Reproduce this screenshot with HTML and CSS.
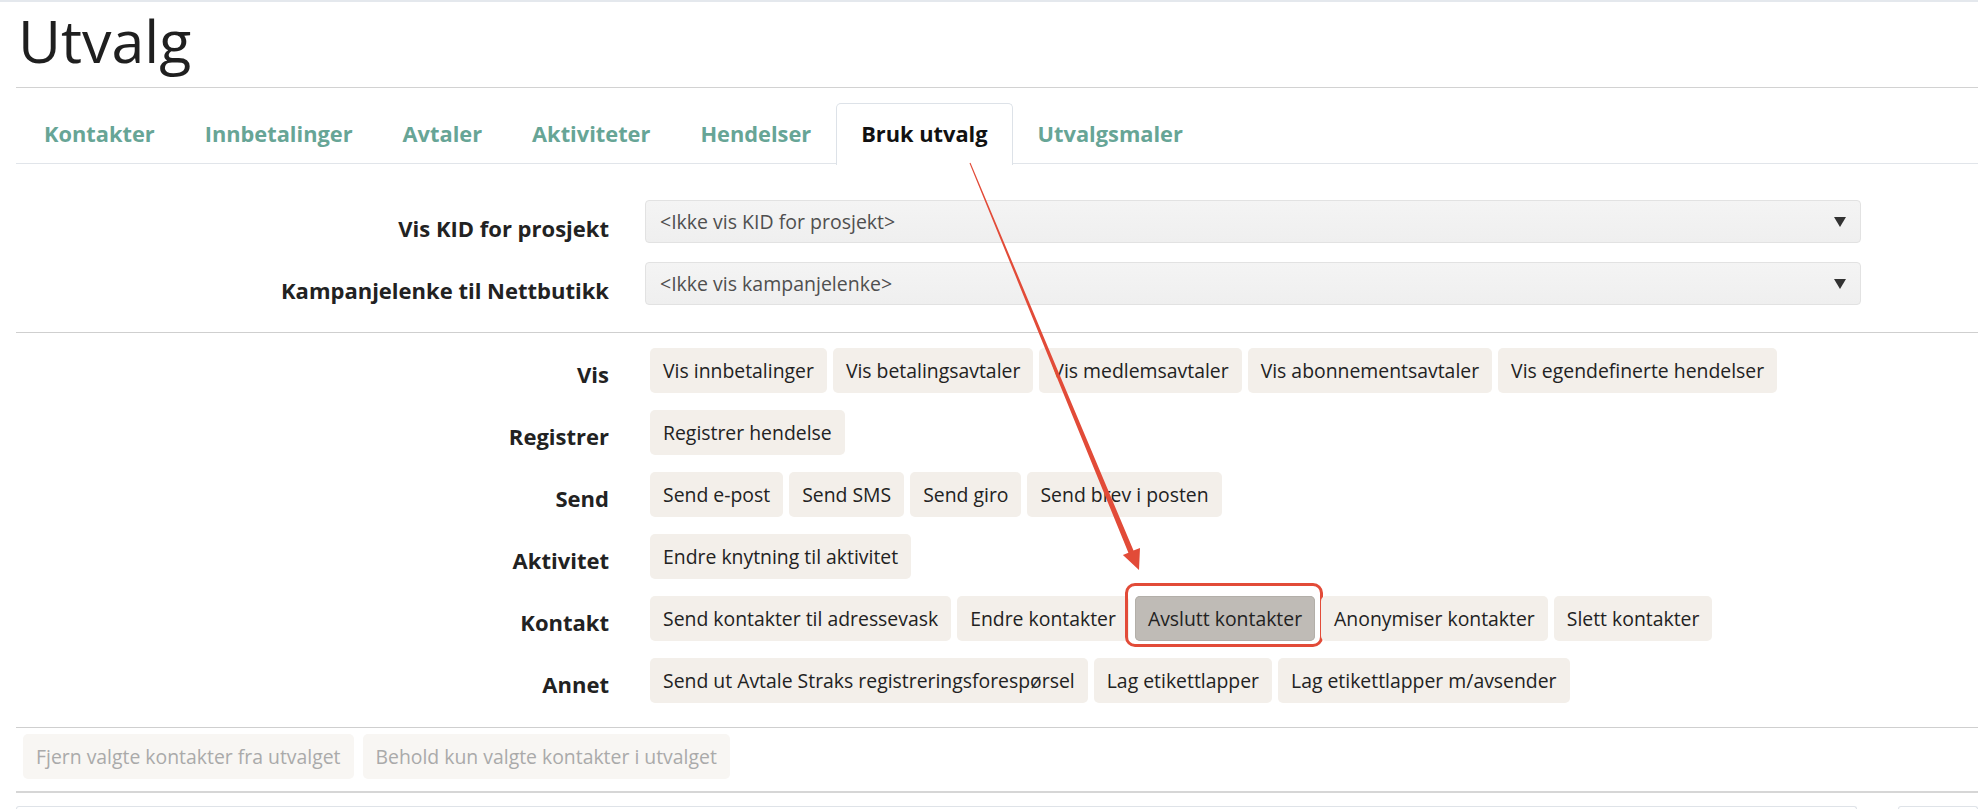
FILE: index.html
```html
<!DOCTYPE html>
<html lang="no">
<head>
    <meta charset="UTF-8">
    <meta name="viewport" content="width=device-width, initial-scale=1.0">
    <title>Utvalg</title>
    <link rel="stylesheet" href="styles.css">
</head>
<body>
    <div class="page">
        <header class="page-header">
            <h1>Utvalg</h1>
        </header>

        <ul class="tabs">
            <li class="tab"><a href="#">Kontakter</a></li>
            <li class="tab"><a href="#">Innbetalinger</a></li>
            <li class="tab"><a href="#">Avtaler</a></li>
            <li class="tab"><a href="#">Aktiviteter</a></li>
            <li class="tab"><a href="#">Hendelser</a></li>
            <li class="tab active"><a href="#">Bruk utvalg</a></li>
            <li class="tab"><a href="#">Utvalgsmaler</a></li>
        </ul>

        <section class="settings">
            <div class="field-row">
                <label class="field-label" for="kid">Vis KID for prosjekt</label>
                <div class="select-wrap">
                    <select id="kid"><option>&lt;Ikke vis KID for prosjekt&gt;</option></select>
                </div>
            </div>
            <div class="field-row">
                <label class="field-label" for="kampanje">Kampanjelenke til Nettbutikk</label>
                <div class="select-wrap">
                    <select id="kampanje"><option>&lt;Ikke vis kampanjelenke&gt;</option></select>
                </div>
            </div>
        </section>

        <section class="actions">
            <div class="action-row">
                <span class="action-label">Vis</span>
                <div class="btn-group">
                    <button class="btn">Vis innbetalinger</button>
                    <button class="btn">Vis betalingsavtaler</button>
                    <button class="btn">Vis medlemsavtaler</button>
                    <button class="btn">Vis abonnementsavtaler</button>
                    <button class="btn">Vis egendefinerte hendelser</button>
                </div>
            </div>
            <div class="action-row">
                <span class="action-label">Registrer</span>
                <div class="btn-group">
                    <button class="btn">Registrer hendelse</button>
                </div>
            </div>
            <div class="action-row">
                <span class="action-label">Send</span>
                <div class="btn-group">
                    <button class="btn">Send e-post</button>
                    <button class="btn">Send SMS</button>
                    <button class="btn">Send giro</button>
                    <button class="btn">Send brev i posten</button>
                </div>
            </div>
            <div class="action-row">
                <span class="action-label">Aktivitet</span>
                <div class="btn-group">
                    <button class="btn">Endre knytning til aktivitet</button>
                </div>
            </div>
            <div class="action-row">
                <span class="action-label">Kontakt</span>
                <div class="btn-group">
                    <button class="btn">Send kontakter til adressevask</button>
                    <button class="btn">Endre kontakter</button>
                    <button class="btn btn-pressed btn-marked">Avslutt kontakter</button>
                    <button class="btn">Anonymiser kontakter</button>
                    <button class="btn">Slett kontakter</button>
                </div>
            </div>
            <div class="action-row">
                <span class="action-label">Annet</span>
                <div class="btn-group">
                    <button class="btn">Send ut Avtale Straks registreringsforespørsel</button>
                    <button class="btn">Lag etikettlapper</button>
                    <button class="btn">Lag etikettlapper m/avsender</button>
                </div>
            </div>
        </section>

        <div class="selection-tools">
            <button class="btn" disabled>Fjern valgte kontakter fra utvalget</button>
            <button class="btn" disabled>Behold kun valgte kontakter i utvalget</button>
        </div>

        <div class="bottom-panels">
            <div class="panel"></div>
            <div class="panel panel-side"></div>
        </div>
    </div>

    <!-- annotation arrow pointing from the tab to the button -->
    <svg class="annotation" width="1978" height="809" viewBox="0 0 1978 809">
        <polygon points="970.5,162.8 1133.5,550.6 1140,548.1 1139,570 1122.9,555.1 1128.4,552.8 969.5,163.2" fill="#e24b38"/>
    </svg>
</body>
</html>
```

FILE: styles.css
```css
html, body {
    margin: 0;
    padding: 0;
    overflow: hidden;
}

body {
    font-family: "Open Sans", "Noto Sans", sans-serif;
    color: #222;
    background-color: #fff;
}

.page {
    border-top: 2px solid #e4e8ed;
}

.page-header {
    margin-left: 16px;
    padding-bottom: 12px;
    border-bottom: 1px solid #d2d2d2;
}

h1 {
    margin: 4px 0 0 2px;
    font-size: 59px;
    font-weight: 500;
    line-height: 69px;
    color: #1f1f1f;
}

.tabs {
    display: flex;
    list-style: none;
    margin: 15px 0 0 16px;
    padding: 0 0 0 3px;
    height: 60px;
    border-bottom: 1px solid #e1e5ea;
}

.tab {
    height: 60px;
    margin-bottom: -1px;
    border: 1px solid transparent;
    border-bottom: none;
    border-radius: 5px 5px 0 0;
}

.tab a {
    display: block;
    padding: 0 24px;
    line-height: 60px;
    font-size: 21.8px;
    font-weight: 700;
    color: #67a596;
    text-decoration: none;
}

.tab.active {
    background-color: #fff;
    border-color: #dde2e8;
    height: 61px;
}

.tab.active a {
    color: #111;
}

.settings {
    margin-left: 16px;
    padding: 36px 0 27px;
    border-bottom: 1px solid #cfcfcf;
    display: flex;
    flex-direction: column;
    gap: 19px;
}

.field-row {
    display: flex;
    align-items: flex-start;
}

.field-label,
.action-label {
    width: 593px;
    flex-shrink: 0;
    text-align: right;
    font-size: 22px;
    font-weight: 700;
    color: #222;
}

.field-label {
    line-height: 43px;
    padding-top: 7px;
    height: 36px;
}

.select-wrap {
    position: relative;
    margin-left: 36px;
    width: 1216px;
}

.select-wrap select {
    appearance: none;
    -webkit-appearance: none;
    width: 100%;
    height: 43px;
    padding: 0 40px 0 14px;
    font-family: inherit;
    font-size: 19.5px;
    color: #4f4f4f;
    background: linear-gradient(#f4f4f4, #efefef);
    border: 1px solid #e2e2e2;
    border-radius: 4px;
    outline: none;
}

.select-wrap::after {
    content: "";
    position: absolute;
    right: 15px;
    top: 17px;
    border-left: 6px solid transparent;
    border-right: 6px solid transparent;
    border-top: 10px solid #333;
    pointer-events: none;
}

.actions {
    margin-left: 16px;
    padding: 15px 0 24px;
    border-bottom: 1px solid #cfcfcf;
    display: flex;
    flex-direction: column;
    gap: 17px;
}

.action-row {
    display: flex;
    align-items: flex-start;
}

.action-label {
    line-height: 45px;
    padding-top: 4px;
    height: 41px;
}

.btn-group {
    display: flex;
    gap: 6px;
    margin-left: 41px;
}

.btn {
    position: relative;
    height: 45px;
    padding: 0 13px;
    font-family: inherit;
    font-size: 19.4px;
    color: #222;
    background-color: #f3efea;
    border: none;
    border-radius: 5px;
    cursor: pointer;
    white-space: nowrap;
}

.btn:disabled {
    color: #aaa;
    background-color: #f8f6f3;
    cursor: default;
}

.btn-pressed {
    background-color: #bfbbb6;
    box-shadow: inset 0 0 0 1px #b3afa9;
}

.btn-marked::after {
    content: "";
    position: absolute;
    left: -10px;
    right: -8px;
    top: -13px;
    bottom: -6px;
    border: 3px solid #e24b38;
    border-radius: 10px;
    pointer-events: none;
}

.selection-tools {
    margin-left: 16px;
    padding: 6px 0 12px 7px;
    border-bottom: 2px solid #d6d6d6;
    display: flex;
    gap: 9px;
}

.bottom-panels {
    display: flex;
    gap: 41px;
    margin: 13px 0 0 16px;
}

.panel {
    flex: 1;
    height: 20px;
    border-top: 1px solid #dfe3e8;
    border-left: 1px solid #dfe3e8;
    border-right: 1px solid #dfe3e8;
    border-radius: 3px 3px 0 0;
}

.panel-side {
    flex: 0 0 78px;
}

.annotation {
    position: absolute;
    top: 0;
    left: 0;
    pointer-events: none;
}
```
